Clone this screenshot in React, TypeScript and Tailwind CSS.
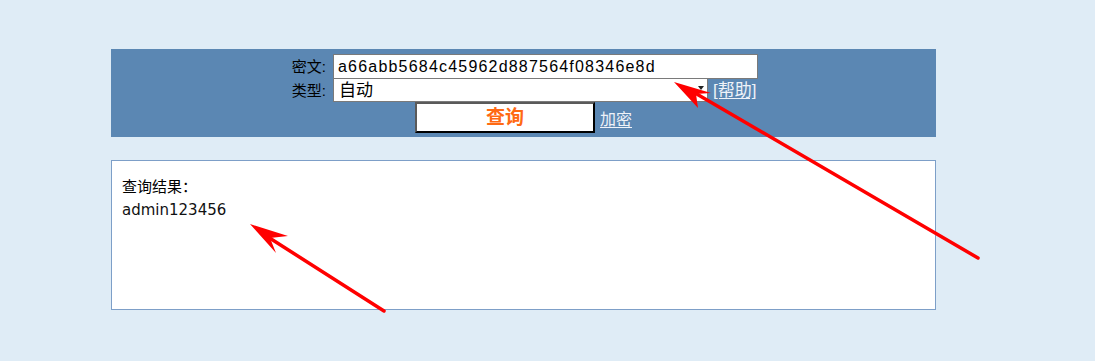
import React from "react";

const cjk = '"Liberation Sans", "Noto Sans CJK SC", sans-serif';

export default function App() {
  return (
    <div className="relative w-[1095px] h-[361px] bg-[#dfecf6] overflow-hidden" style={{ fontFamily: cjk }}>
      <div className="ml-[111px] mt-[49px] w-[825px] h-[88px] bg-[#5b87b3] pt-[5px] flex flex-col items-center">
        {/* row 1 */}
        <div className="w-[469px] h-[25px] flex items-center">
          <div className="w-[44px] pr-[7px] text-right text-[15px] leading-none text-black">密文:</div>
          <div className="w-[425px] h-[25px] bg-white border border-[#7a7a7a] pl-[4px] flex items-center text-[16px] tracking-[1.2px] text-black leading-none">
            a66abb5684c45962d887564f08346e8d
          </div>
        </div>
        {/* row 2 */}
        <div className="w-[469px] h-[23px] flex items-center">
          <div className="w-[44px] pr-[7px] text-right text-[15px] leading-none text-black">类型:</div>
          <div className="relative w-[375px] h-[23px] bg-white border border-[#7a7a7a] border-t-0 pl-[5px] flex items-center text-[17px] text-black leading-none">
            自动
            <span className="absolute right-[3px] top-[7px] w-0 h-0 border-l-[3px] border-r-[3px] border-t-[4px] border-l-transparent border-r-transparent border-t-[#222]" />
          </div>
          <a className="ml-[5px] text-[17px] leading-none text-[#eef2f8] underline underline-offset-2">[帮助]</a>
        </div>
        {/* row 3 */}
        <div className="h-[31px] flex items-center">
          <div className="w-[180px] h-[31px] bg-white border-2 border-t-[#5a5a5a] border-l-[#5a5a5a] border-b-black border-r-black flex items-center justify-center text-[19px] font-bold text-[#ff6a13] leading-none">
            查询
          </div>
          <a className="ml-[5px] mt-[5px] text-[16px] leading-none text-[#eef2f8] underline underline-offset-2">加密</a>
        </div>
      </div>

      <div className="ml-[111px] mt-[23px] w-[825px] h-[150px] bg-white border border-[#7d9fc8] pl-[10px] pt-[17px]">
        <div className="text-[15px] leading-[18px] text-black">查询结果：</div>
        <div className="mt-[5px] text-[15px] leading-[18px] text-[#111]" style={{ fontFamily: '"DejaVu Sans", Verdana, sans-serif' }}>
          admin123456
        </div>
      </div>

      <svg className="absolute left-0 top-0 pointer-events-none" width="1095" height="361" viewBox="0 0 1095 361">
        <line x1="978" y1="258" x2="695" y2="93" stroke="#ff0000" strokeWidth="3.5" strokeLinecap="round" />
        <polygon points="674,82 711,93 696,94 698,108" fill="#ff0000" />
        <line x1="384" y1="311" x2="268" y2="237" stroke="#ff0000" strokeWidth="3.5" strokeLinecap="round" />
        <polygon points="250,224 288,236 270,238 276,253" fill="#ff0000" />
      </svg>
    </div>
  );
}
